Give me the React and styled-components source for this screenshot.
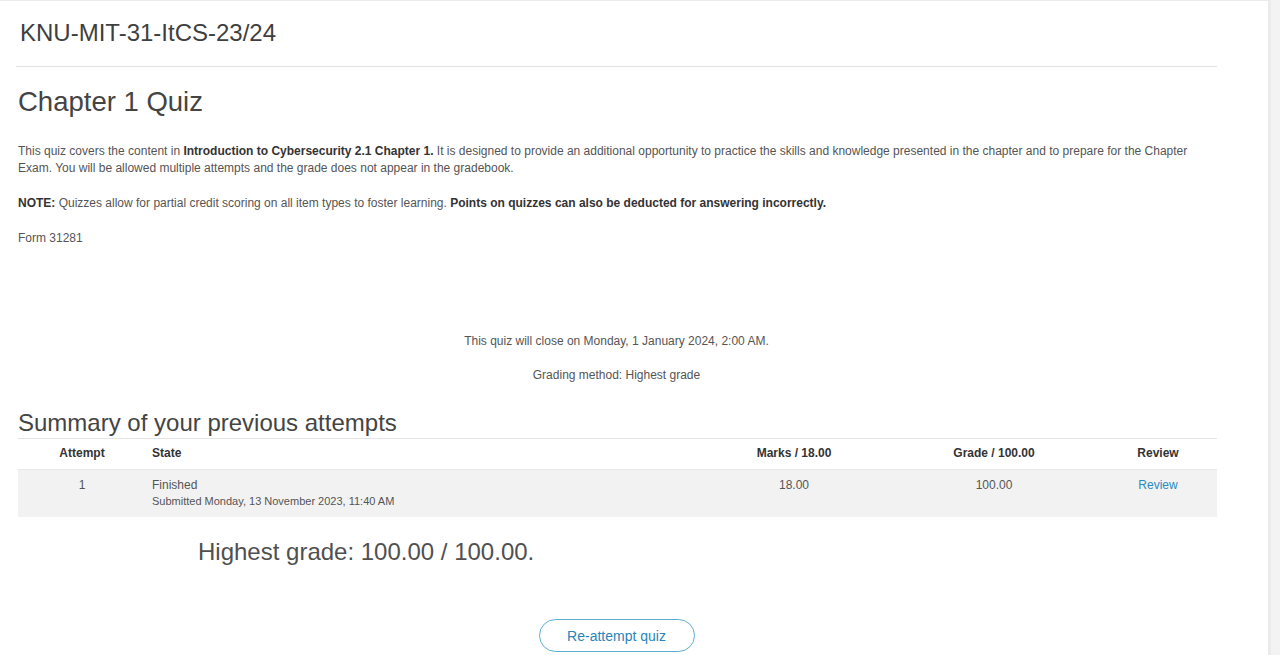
import React from 'react'
import styled, { createGlobalStyle } from 'styled-components'

const GlobalStyle = createGlobalStyle`
  html, body {
    margin: 0;
    padding: 0;
    background: #fff;
  }
  body {
    font-family: "Liberation Sans", Arial, sans-serif;
    color: #555;
  }
`

const Page = styled.div`
  display: flex;
  min-height: 655px;
`

const Main = styled.div`
  flex: 1;
  border-top: 1px solid #ececec;
  padding: 0 51px 0 16px;
`

const Gutter = styled.div`
  width: 9px;
  background: #f3f3f3;
  border-left: 3px solid #ebebeb;
`

const CourseHeader = styled.div`
  height: 66px;
  display: flex;
  align-items: center;
  padding: 0 0 2px 4px;
  box-sizing: border-box;
  border-bottom: 1px solid #e2e2e2;
  font-size: 24px;
  color: #3f3f3f;
`

const Title = styled.h2`
  margin: 18px 0 24px 2px;
  font-size: 27.5px;
  font-weight: normal;
  line-height: 34px;
  color: #444;
`

const Para = styled.p`
  margin: 0 0 18px 2px;
  max-width: 1185px;
  font-size: 12px;
  line-height: 17px;
  color: #555;

  b {
    color: #333;
  }
`

const Info = styled.div`
  margin-top: 86px;
  display: flex;
  flex-direction: column;
  align-items: center;
  gap: 17px;
  font-size: 12px;
  line-height: 17px;
  color: #555;
`

const SectionTitle = styled.h3`
  margin: 25px 0 1px 2px;
  font-size: 24px;
  font-weight: normal;
  line-height: 28px;
  color: #444;
`

const Table = styled.div`
  margin-left: 2px;
  width: 1199px;
  border-top: 1px solid #e4e4e4;
`

const Row = styled.div`
  display: grid;
  grid-template-columns: 128px 553px 190px 210px 118px;
  background: ${p => (p.$head ? '#fff' : '#f2f2f2')};
  height: ${p => (p.$head ? '30px' : '47px')};
  border-top: ${p => (p.$head ? 'none' : '1px solid #e8e8e8')};
  font-size: 12px;
  color: ${p => (p.$head ? '#333' : '#555')};
  font-weight: ${p => (p.$head ? 'bold' : 'normal')};
`

const Cell = styled.div`
  padding: ${p => (p.$head ? '7px 6px 0' : '8px 6px 0')};
  line-height: 14px;
  text-align: ${p => p.$align || 'center'};
`

const Sub = styled.div`
  margin-top: 3px;
  font-size: 11px;
  line-height: 13px;
`

const ReviewLink = styled.a`
  color: #2a8abd;
  text-decoration: none;
`

const Highest = styled.div`
  margin: 21px 0 0 182px;
  font-size: 24px;
  line-height: 28px;
  color: #505050;
`

const ButtonRow = styled.div`
  margin-top: 53px;
  display: flex;
  justify-content: center;
`

const PillButton = styled.button`
  width: 156px;
  height: 33px;
  border: 1px solid #5aaed3;
  border-radius: 17px;
  background: #fff;
  color: #2a84b8;
  font-family: "Liberation Sans", Arial, sans-serif;
  font-size: 14px;
  cursor: pointer;
`

export default function App() {
  return (
    <Page>
      <GlobalStyle />
      <Main>
        <CourseHeader>KNU-MIT-31-ItCS-23/24</CourseHeader>
        <Title>Chapter 1 Quiz</Title>
        <Para>
          This quiz covers the content in <b>Introduction to Cybersecurity 2.1 Chapter 1.</b> It is
          designed to provide an additional opportunity to practice the skills and knowledge presented
          in the chapter and to prepare for the Chapter Exam. You will be allowed multiple attempts and
          the grade does not appear in the gradebook.
        </Para>
        <Para>
          <b>NOTE:</b> Quizzes allow for partial credit scoring on all item types to foster learning.{' '}
          <b>Points on quizzes can also be deducted for answering incorrectly.</b>
        </Para>
        <Para>Form 31281</Para>

        <Info>
          <div>This quiz will close on Monday, 1 January 2024, 2:00 AM.</div>
          <div>Grading method: Highest grade</div>
        </Info>

        <SectionTitle>Summary of your previous attempts</SectionTitle>
        <Table>
          <Row $head>
            <Cell $head>Attempt</Cell>
            <Cell $head $align="left">State</Cell>
            <Cell $head>Marks / 18.00</Cell>
            <Cell $head>Grade / 100.00</Cell>
            <Cell $head>Review</Cell>
          </Row>
          <Row>
            <Cell>1</Cell>
            <Cell $align="left">
              Finished
              <Sub>Submitted Monday, 13 November 2023, 11:40 AM</Sub>
            </Cell>
            <Cell>18.00</Cell>
            <Cell>100.00</Cell>
            <Cell>
              <ReviewLink href="#">Review</ReviewLink>
            </Cell>
          </Row>
        </Table>

        <Highest>Highest grade: 100.00 / 100.00.</Highest>

        <ButtonRow>
          <PillButton>Re-attempt quiz</PillButton>
        </ButtonRow>
      </Main>
      <Gutter />
    </Page>
  )
}
